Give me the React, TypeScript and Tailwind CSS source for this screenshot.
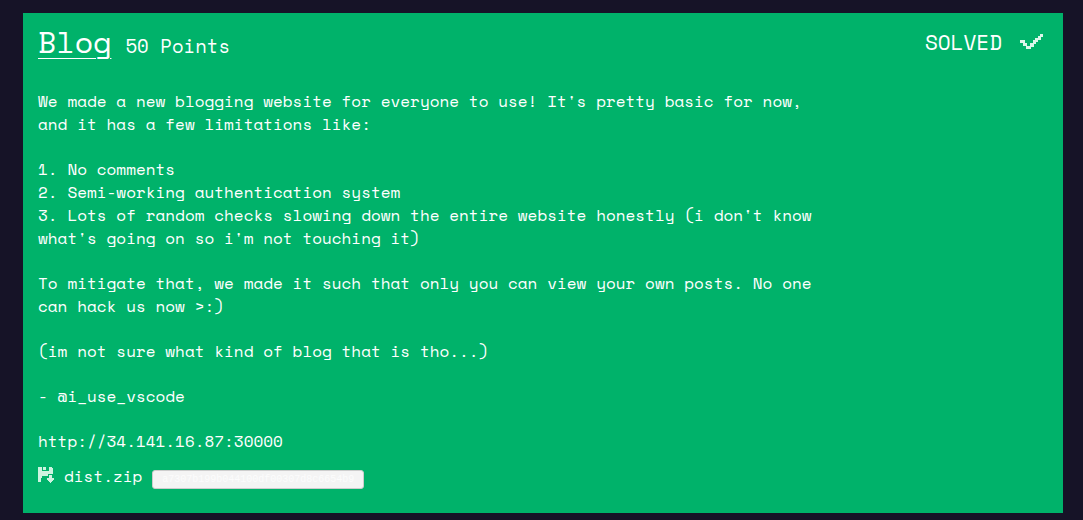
const paragraph = "text-base leading-[23px]";

function DownloadIcon() {
  return (
    <svg aria-hidden="true" viewBox="0 0 16 16" className="mt-0.5 h-4 w-4 self-start fill-[#cdf3e0]" shapeRendering="crispEdges">
      <path d="M0 0h4v4h7V0h3v1h1v6h-5v2H4v2H3v4H0z" />
      <path d="M5 0h3v3H5zM11 8h3v3h2v2h-1v1h-1v1h-1v1h-1v-1h-1v-1h-1v-1H9v-2h2z" />
    </svg>
  );
}

function CheckIcon() {
  return (
    <svg aria-hidden="true" viewBox="0 0 23 16" className="h-4 w-[23px] fill-[#dcf6ea]" shapeRendering="crispEdges">
      <path d="M0 6h5v3h2v3h3V9h3V6h2V4h3V2h2V0h3v3h-2v3h-3v2h-2v2h-2v3h-3v2H6v-3H3V9H0z" />
    </svg>
  );
}

export default function App() {
  return (
    <div className="min-h-screen bg-[#161327] px-5 pt-[13px] pb-[7px] pl-[23px] font-['Space_Mono','Liberation_Mono',monospace] text-white">
      <main className="bg-[#00b26a] px-[15px] pt-[9px] pb-6">
        <header className="flex items-start justify-between">
          <div className="flex items-baseline gap-[14px]">
            <h1 className="text-3xl leading-10">
              <a href="#blog" className="underline decoration-1 underline-offset-5">Blog</a>
            </h1>
            <p className="text-[19px]">50 Points</p>
          </div>
          <div className="flex items-center gap-[18px] pt-1 pr-[5px]">
            <span className="text-[21px] leading-8">SOLVED</span>
            <CheckIcon />
          </div>
        </header>
        <div className="flex max-w-[780px] flex-col gap-[22px] pt-[28px]">
          <p className={paragraph}>
            We made a new blogging website for everyone to use! It's pretty basic for now, and it has a few limitations like:
          </p>
          <div className={paragraph}>
            <p>1. No comments</p>
            <p>2. Semi-working authentication system</p>
            <p>3. Lots of random checks slowing down the entire website honestly (i don't know what's going on so i'm not touching it)</p>
          </div>
          <p className={paragraph}>
            To mitigate that, we made it such that only you can view your own posts. No one can hack us now &gt;:)
          </p>
          <p className={paragraph}>(im not sure what kind of blog that is tho...)</p>
          <p className={paragraph}>- @i_use_vscode</p>
          <p className={paragraph}>http://34.141.16.87:30000</p>
        </div>
        <div className="flex items-baseline gap-[10px] pt-3">
          <a href="#dist" className="flex items-baseline gap-[10px] text-base leading-[23px]">
            <DownloadIcon />
            dist.zip
          </a>
          <code className="rounded-[3px] border border-[#cccccc] bg-[#f4f4f4] px-[9px] font-['Liberation_Mono',monospace] text-[10px] leading-[17px] text-[#fcfcfc]">
            a7307b199b044100df00307d8c6654b9
          </code>
        </div>
      </main>
    </div>
  );
}
